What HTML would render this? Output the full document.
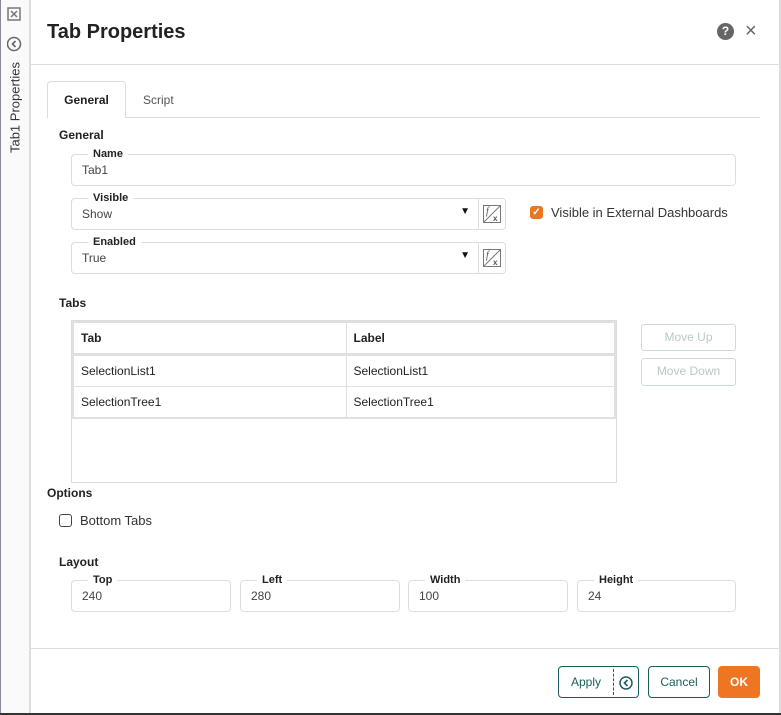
<!DOCTYPE html>
<html><head><meta charset="utf-8"><style>
*{box-sizing:border-box;margin:0;padding:0}
body{width:781px;height:715px;position:relative;overflow:hidden;background:#fff;font-family:"Liberation Sans",sans-serif;font-size:12px;color:#333}
.a{position:absolute}
.box{position:absolute;border:1px solid #ddd;border-radius:4px;background:#fff}
.lg{position:absolute;background:#fff;padding:0 5px;font-weight:bold;font-size:11px;color:#222;top:-8px;left:16px;line-height:14px}
.v{position:absolute;left:10px;top:8px;color:#444}
.h{font-weight:bold;color:#222;font-size:12px}
.fx{position:absolute;width:28px;height:32px;border:1px solid #ddd;border-radius:0 4px 4px 0;background:#fff}
.btn{position:absolute;border:1px solid #1d5c5c;border-radius:4px;color:#1d5c5c;text-align:center;font-size:12px}
.dis{position:absolute;border:1px solid #c8dcdc;border-radius:3px;color:#b8c8c8;text-align:center;line-height:25px;font-size:12px}
td{border:1px solid #e0e0e0;padding:0 7px;height:32px;color:#222}
</style></head><body>
<div class="a" style="left:0;top:0;width:2px;height:715px;background:#889"></div>
<div class="a" style="left:0;top:713px;width:781px;height:2px;background:#333"></div>
<div class="a" style="left:1px;top:0;width:30px;height:713px;background:#fafafa;border-right:2px solid #ddd"></div>
<div class="a" style="left:779px;top:0;width:2px;height:713px;background:#ddd"></div>
<svg class="a" style="left:7px;top:7px" width="15" height="45" viewBox="0 0 15 45"><rect x="1" y="1" width="12" height="12" fill="none" stroke="#777" stroke-width="1.5"/><path d="M4 4L10 10M10 4L4 10" stroke="#777" stroke-width="1.5"/><circle cx="7" cy="37" r="6.5" fill="none" stroke="#666" stroke-width="1.5"/><path d="M8.5 34L5.5 37L8.5 40" fill="none" stroke="#666" stroke-width="1.6"/></svg>
<div class="a" style="left:-40px;top:100px;width:110px;transform:rotate(-90deg);text-align:center;font-size:13px;color:#333;white-space:nowrap">Tab1 Properties</div>
<div class="a" style="left:47px;top:21px;font-size:20px;font-weight:bold;color:#222">Tab Properties</div>
<div class="a" style="left:717px;top:23px;width:17px;height:17px;border-radius:50%;background:#666;color:#fff;font-weight:bold;text-align:center;line-height:17px;font-size:12px">?</div>
<div class="a" style="left:745px;top:20px;font-size:20px;color:#666">×</div>
<div class="a" style="left:31px;top:64px;width:748px;height:1px;background:#ddd"></div>
<div class="a" style="left:47px;top:117px;width:713px;height:1px;background:#ddd"></div>
<div class="a" style="left:47px;top:81px;width:79px;height:37px;border:1px solid #ddd;border-bottom:none;border-radius:4px 4px 0 0;background:#fff;text-align:center;line-height:36px;font-weight:bold;color:#222">General</div>
<div class="a" style="left:143px;top:93px;color:#555">Script</div>
<div class="a h" style="left:59px;top:128px">General</div>
<div class="box" style="left:71px;top:154px;width:665px;height:32px"><span class="lg">Name</span><span class="v">Tab1</span></div>
<div class="box" style="left:71px;top:198px;width:408px;height:32px;border-radius:4px 0 0 4px"><span class="lg">Visible</span><span class="v">Show</span><span class="a" style="right:8px;top:7px;font-size:10px;color:#111">▼</span></div>
<div class="fx" style="left:478px;top:198px"><svg class="a" style="left:4px;top:6px" width="19" height="19"><rect x="0.5" y="0.5" width="17" height="17" fill="none" stroke="#777"/><path d="M1 17L17 1" stroke="#777"/><text x="3" y="9" font-size="10" font-style="italic" fill="#555" font-family="Liberation Serif">f</text><text x="10" y="16" font-size="8" fill="#555" font-weight="bold">x</text></svg></div>
<div class="box" style="left:71px;top:242px;width:408px;height:32px;border-radius:4px 0 0 4px"><span class="lg">Enabled</span><span class="v">True</span><span class="a" style="right:8px;top:7px;font-size:10px;color:#111">▼</span></div>
<div class="fx" style="left:478px;top:242px"><svg class="a" style="left:4px;top:6px" width="19" height="19"><rect x="0.5" y="0.5" width="17" height="17" fill="none" stroke="#777"/><path d="M1 17L17 1" stroke="#777"/><text x="3" y="9" font-size="10" font-style="italic" fill="#555" font-family="Liberation Serif">f</text><text x="10" y="16" font-size="8" fill="#555" font-weight="bold">x</text></svg></div>
<div class="a" style="left:530px;top:206px;width:13px;height:13px;border-radius:3px;background:#e87722;color:#fff;font-size:10px;text-align:center;line-height:13px;font-weight:bold">✓</div>
<div class="a" style="left:551px;top:205px;font-size:13px;color:#333">Visible in External Dashboards</div>
<div class="a h" style="left:59px;top:296px">Tabs</div>
<div class="a" style="left:71px;top:320px;width:546px;height:163px;border:1px solid #ddd">
<table style="border-collapse:collapse;width:544px;border:2px solid #e0e0e0">
<tr><td style="width:273px;font-weight:bold;border-bottom:3px solid #e0e0e0">Tab</td><td style="font-weight:bold;border-bottom:3px solid #e0e0e0">Label</td></tr>
<tr><td>SelectionList1</td><td>SelectionList1</td></tr>
<tr><td>SelectionTree1</td><td>SelectionTree1</td></tr>
</table></div>
<div class="dis" style="left:641px;top:324px;width:95px;height:27px">Move Up</div>
<div class="dis" style="left:641px;top:358px;width:95px;height:28px">Move Down</div>
<div class="a h" style="left:47px;top:486px">Options</div>
<div class="a" style="left:59px;top:514px;width:13px;height:13px;border:1.5px solid #444;border-radius:3px"></div>
<div class="a" style="left:80px;top:513px;font-size:13px">Bottom Tabs</div>
<div class="a h" style="left:59px;top:555px">Layout</div>
<div class="box" style="left:71px;top:580px;width:160px;height:32px"><span class="lg">Top</span><span class="v">240</span></div>
<div class="box" style="left:240px;top:580px;width:160px;height:32px"><span class="lg">Left</span><span class="v">280</span></div>
<div class="box" style="left:408px;top:580px;width:160px;height:32px"><span class="lg">Width</span><span class="v">100</span></div>
<div class="box" style="left:577px;top:580px;width:159px;height:32px"><span class="lg">Height</span><span class="v">24</span></div>
<div class="a" style="left:31px;top:648px;width:748px;height:1px;background:#ddd"></div>
<div class="btn" style="left:558px;top:666px;width:81px;height:32px;line-height:30px"><span class="a" style="left:12px;top:0">Apply</span><span class="a" style="left:54px;top:2px;height:26px;border-left:1px dashed #1d5c5c"></span><svg class="a" style="left:60px;top:9px" width="14" height="14"><circle cx="7" cy="7" r="6" fill="none" stroke="#1d5c5c" stroke-width="1.5"/><path d="M8.5 4L5.5 7L8.5 10" fill="none" stroke="#1d5c5c" stroke-width="1.6"/></svg></div>
<div class="btn" style="left:648px;top:666px;width:62px;height:32px;line-height:30px">Cancel</div>
<div class="a" style="left:718px;top:666px;width:42px;height:32px;border-radius:4px;background:#ee7623;color:#fff;text-align:center;line-height:32px;font-weight:bold">OK</div>
</body></html>
